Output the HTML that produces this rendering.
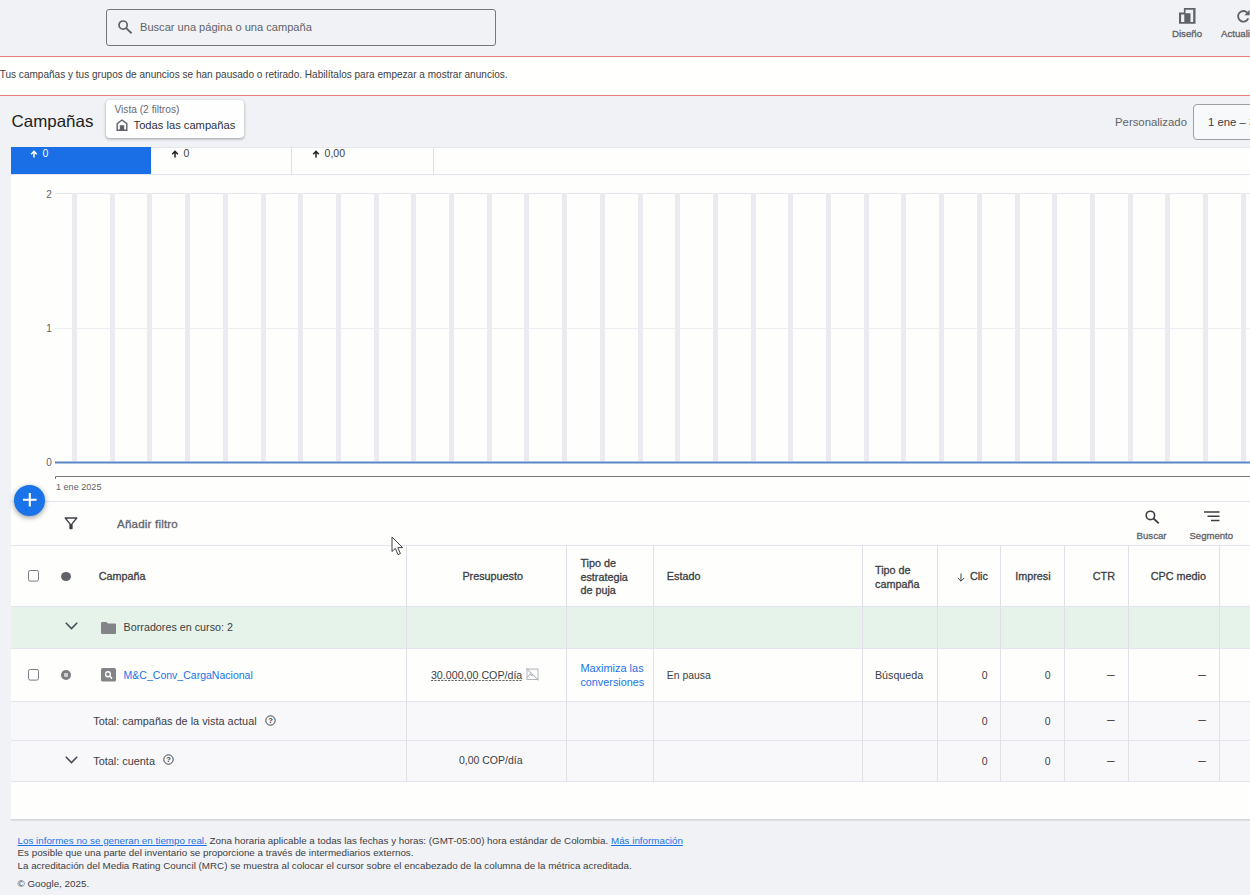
<!DOCTYPE html>
<html lang="es">
<head>
<meta charset="utf-8">
<title>Campañas</title>
<style>
*{box-sizing:border-box;margin:0;padding:0}
html,body{width:1250px;height:895px;overflow:hidden}
body{background:#f1f2f5;font-family:"Liberation Sans",sans-serif;color:#3c4043;position:relative;font-size:11px}
.abs{position:absolute;white-space:nowrap;line-height:1}
svg{position:absolute;overflow:visible}
#search{position:absolute;left:106px;top:9px;width:390px;height:37px;border:1px solid #73777c;border-radius:3px;background:#f1f2f5}
#banner{position:absolute;left:0;top:56px;width:1250px;height:40px;background:#fffffd;border-top:1px solid #e8837a;border-bottom:1px solid #e8837a}
#chip{position:absolute;left:106px;top:100px;width:138px;height:38px;background:#fefefe;border-radius:4px;box-shadow:0 1px 2px rgba(60,64,67,.3),0 1px 3px 1px rgba(60,64,67,.15)}
#datebtn{position:absolute;left:1193px;top:104px;width:80px;height:36px;border:1px solid #9aa0a6;border-radius:4px;background:#f8f9fa}
#card{position:absolute;left:11px;top:147px;width:1260px;height:672px;background:#fefefd;box-shadow:0 1px 0 #d5d6da,0 2px 0 #e0e1e5}
#tab1{position:absolute;left:0;top:0;width:140px;height:27px;background:#1a6ee6}
.vsep{position:absolute;width:1px;background:#e0e1e8}
.hline{position:absolute;left:0;width:1260px;height:1px;background:#e2e4ee}
.bar{position:absolute;top:46px;width:5px;height:268px;background:#e9ebf1}
.row{position:absolute;left:0;width:1260px}
.cb{position:absolute;width:11px;height:11px;border:1px solid #80868b;border-radius:2px;background:#fff}
.h{font-weight:bold;color:#3c4043}
.t{color:#3c4043}
.lnk{color:#1a73e8}
#fab{position:absolute;left:14px;top:485px;width:31px;height:31px;border-radius:50%;background:#1a73e8;box-shadow:0 2px 4px rgba(60,64,67,.35),0 1px 6px rgba(60,64,67,.2)}
.foot{position:absolute;left:17.5px;color:#3c4043;white-space:nowrap;line-height:1}
.foot a{color:#1a73e8;text-decoration:underline}
</style>
</head>
<body>
<div id="search"></div>
<svg style="left:118.4px;top:19.5px" width="15" height="14" viewBox="0 0 15 14"><circle cx="5.1" cy="5.1" r="4.1" fill="none" stroke="#5f6368" stroke-width="1.7"/><path d="M8.1 8.1 L13.6 13.2" stroke="#5f6368" stroke-width="1.9"/></svg>
<span class="abs" id="ph" style="left:140px;top:21.99px;font-size:11.08px;color:#5f6368;">Buscar una página o una campaña</span>
<svg style="left:1179px;top:8px" width="17" height="16" viewBox="0 0 17 16"><path fill-rule="evenodd" fill="#5f6368" d="M0 4.6 H4.9 V0 H16.5 V15.8 H0 Z M2.1 6.5 H5.3 V14 H2.1 Z M6.5 1.8 H14.2 V14 H11.5 V5.3 H6.5 Z"/></svg>
<span class="abs" id="dis" style="left:1172px;top:28.78px;font-size:9.66px;-webkit-text-stroke:0.3px;color:#5f6368;">Diseño</span>
<svg style="left:1236px;top:9px" width="14" height="14" viewBox="0 0 14 14"><path d="M11.2 3.6 A5.3 5.3 0 1 0 12.3 9.3" fill="none" stroke="#5f6368" stroke-width="1.8"/><path d="M13.6 0.8 V6.2 H8.4 Z" fill="#5f6368"/></svg>
<span class="abs" id="act" style="left:1221px;top:28.78px;font-size:9.66px;-webkit-text-stroke:0.3px;color:#5f6368;">Actualizar</span>
<div id="banner"></div>
<span class="abs" id="bt" style="left:-0.3px;top:70.09px;font-size:10.05px;color:#3c4043;">Tus campañas y tus grupos de anuncios se han pausado o retirado. Habilítalos para empezar a mostrar anuncios.</span>
<span class="abs" id="ttl" style="left:11.6px;top:113.53px;font-size:16.92px;color:#202124;">Campañas</span>
<div id="chip"></div>
<span class="abs" id="v1" style="left:114.4px;top:105.31px;font-size:10.21px;color:#686c71;">Vista (2 filtros)</span>
<svg style="left:116px;top:119px" width="12" height="12" viewBox="0 0 12 12"><path d="M1.2 11.2 V4.6 L6 1 L10.8 4.6 V11.2 Z" fill="none" stroke="#5f6368" stroke-width="1.4"/><rect x="3.8" y="6.2" width="4.4" height="5" fill="#5f6368"/></svg>
<span class="abs" id="v2" style="left:133.6px;top:120.34px;font-size:11.17px;color:#303336;">Todas las campañas</span>
<span class="abs" id="pers" style="left:1115px;top:117.25px;font-size:11.36px;color:#5f6368;">Personalizado</span>
<div id="datebtn"></div>
<span class="abs" id="dt" style="left:1208px;top:117.25px;font-size:11.36px;color:#3c4043;">1 ene – 31 ene 2025</span>
<div id="card">
<div class="hline" style="top:0;background:#e6e7eb"></div>
<div id="tab1"></div>
<div class="hline" style="top:27px"></div>
<div class="vsep" style="left:280px;top:0;height:27px"></div>
<div class="vsep" style="left:422px;top:0;height:27px"></div>
<svg style="left:18.9px;top:2.5px" width="8" height="8" viewBox="0 0 8 8"><path d="M4 7.6 V1.6 M1.2 4.2 L4 1.3 L6.8 4.2" fill="none" stroke="#fff" stroke-width="1.5"/></svg>
<span class="abs" id="m1" style="left:31.6px;top:1.17px;font-size:10.5px;color:#fff;">0</span>
<svg style="left:159.9px;top:2.5px" width="8" height="8" viewBox="0 0 8 8"><path d="M4 7.6 V1.6 M1.2 4.2 L4 1.3 L6.8 4.2" fill="none" stroke="#202124" stroke-width="1.5"/></svg>
<span class="abs" id="m2" style="left:172.6px;top:1.17px;font-size:10.5px;color:#3c4043;">0</span>
<svg style="left:300.9px;top:2.5px" width="8" height="8" viewBox="0 0 8 8"><path d="M4 7.6 V1.6 M1.2 4.2 L4 1.3 L6.8 4.2" fill="none" stroke="#202124" stroke-width="1.5"/></svg>
<span class="abs" id="m3" style="left:313.6px;top:1.17px;font-size:10.5px;color:#3c4043;">0,00</span>
<div style="position:absolute;left:44px;top:46px;width:1210px;height:1px;background:#e4e6ee"></div>
<div style="position:absolute;left:44px;top:181px;width:1210px;height:1px;background:#eceef3"></div>
<div class="bar" style="left:61.0px"></div>
<div class="bar" style="left:98.7px"></div>
<div class="bar" style="left:136.4px"></div>
<div class="bar" style="left:174.1px"></div>
<div class="bar" style="left:211.8px"></div>
<div class="bar" style="left:249.5px"></div>
<div class="bar" style="left:287.2px"></div>
<div class="bar" style="left:324.9px"></div>
<div class="bar" style="left:362.6px"></div>
<div class="bar" style="left:400.3px"></div>
<div class="bar" style="left:438.0px"></div>
<div class="bar" style="left:475.7px"></div>
<div class="bar" style="left:513.4px"></div>
<div class="bar" style="left:551.1px"></div>
<div class="bar" style="left:588.8px"></div>
<div class="bar" style="left:626.5px"></div>
<div class="bar" style="left:664.2px"></div>
<div class="bar" style="left:701.9px"></div>
<div class="bar" style="left:739.6px"></div>
<div class="bar" style="left:777.3px"></div>
<div class="bar" style="left:815.0px"></div>
<div class="bar" style="left:852.7px"></div>
<div class="bar" style="left:890.4px"></div>
<div class="bar" style="left:928.1px"></div>
<div class="bar" style="left:965.8px"></div>
<div class="bar" style="left:1003.5px"></div>
<div class="bar" style="left:1041.2px"></div>
<div class="bar" style="left:1078.9px"></div>
<div class="bar" style="left:1116.6px"></div>
<div class="bar" style="left:1154.3px"></div>
<div class="bar" style="left:1192.0px"></div>
<div class="bar" style="left:1229.7px"></div>
<div class="bar" style="left:1267.4px"></div>
<svg style="left:0;top:0" width="1260" height="672"><path d="M44 315.5 H1260" stroke="#5a86c6" stroke-width="1.9" fill="none"/><path d="M44.5 332 V329.5 H1260" stroke="#74777b" stroke-width="1" fill="none"/></svg>
<span class="abs" id="y2" style="left:35.2px;top:43.12px;font-size:10px;color:#5f6368;">2</span>
<span class="abs" id="y1" style="left:35.2px;top:177.01px;font-size:10px;color:#5f6368;">1</span>
<span class="abs" id="y0" style="left:35.2px;top:310.91px;font-size:10px;color:#5f6368;">0</span>
<span class="abs" id="xl" style="left:45px;top:335.96px;font-size:9.08px;color:#5f6368;">1 ene 2025</span>
<div class="hline" style="top:354px"></div>
<div class="hline" style="top:398px"></div>
<svg style="left:53px;top:370px" width="14" height="13" viewBox="0 0 14 13"><path d="M1.2 1 H12.8 L8 6.8 V11.6 H6 V6.8 Z" fill="none" stroke="#3c4043" stroke-width="1.3" stroke-linejoin="round"/><rect x="6" y="7" width="2" height="5" fill="#3c4043"/></svg>
<span class="abs" id="af" style="left:106px;top:371.33px;font-size:11.6px;-webkit-text-stroke:0.3px;color:#5f6368;letter-spacing:0.18px;">Añadir filtro</span>
<svg style="left:1133.5px;top:363px" width="15" height="14" viewBox="0 0 15 14"><circle cx="5.4" cy="5.4" r="4.2" fill="none" stroke="#3c4043" stroke-width="1.6"/><path d="M8.5 8.5 L13.8 13.4" stroke="#3c4043" stroke-width="1.8"/></svg>
<span class="abs" id="bs" style="left:1125.6px;top:383.71px;font-size:9.6px;-webkit-text-stroke:0.3px;color:#5f6368;">Buscar</span>
<svg style="left:1193px;top:364px" width="16" height="11" viewBox="0 0 16 11"><path d="M0 1 H15.5 M3.5 5.3 H15.5 M7 9.6 H15.5" stroke="#3c4043" stroke-width="1.5"/></svg>
<span class="abs" id="sg" style="left:1178.4px;top:383.71px;font-size:9.6px;-webkit-text-stroke:0.3px;color:#5f6368;">Segmento</span>
<div class="row" style="top:460px;height:41px;background:#e6f3ea"></div>
<div class="row" style="top:555px;height:79px;background:#f8f8fb"></div>
<div class="hline" style="top:459px"></div>
<div class="hline" style="top:501px"></div>
<div class="hline" style="top:554px"></div>
<div class="hline" style="top:593px"></div>
<div class="hline" style="top:634px"></div>
<div class="vsep" style="left:395px;top:399px;height:235px"></div>
<div class="vsep" style="left:555px;top:399px;height:235px"></div>
<div class="vsep" style="left:642px;top:399px;height:235px"></div>
<div class="vsep" style="left:851px;top:399px;height:235px"></div>
<div class="vsep" style="left:926px;top:399px;height:235px"></div>
<div class="vsep" style="left:989px;top:399px;height:235px"></div>
<div class="vsep" style="left:1053px;top:399px;height:235px"></div>
<div class="vsep" style="left:1117px;top:399px;height:235px"></div>
<div class="vsep" style="left:1208px;top:399px;height:235px"></div>
<svg style="left:17px;top:423.2px" width="11" height="12" viewBox="0 0 11 12"><rect x="0.5" y="0.5" width="10" height="10.6" rx="1.8" fill="#fff" stroke="#787a80" stroke-width="1"/></svg>
<div style="position:absolute;left:50px;top:425px;width:10px;height:9px;border-radius:50%;background:#5f6368"></div>
<span class="abs" id="h1" style="left:87.8px;top:424.42px;font-size:10.8px;-webkit-text-stroke:0.3px;color:#3c4043;">Campaña</span>
<span class="abs" id="h2" style="right:748px;top:424.42px;font-size:10.8px;-webkit-text-stroke:0.3px;color:#3c4043;">Presupuesto</span>
<span class="abs" id="h3a" style="left:569.4px;top:411.22px;font-size:10.8px;-webkit-text-stroke:0.3px;color:#3c4043;">Tipo de</span>
<span class="abs" id="h3b" style="left:569.4px;top:424.72px;font-size:10.8px;-webkit-text-stroke:0.3px;color:#3c4043;">estrategia</span>
<span class="abs" id="h3c" style="left:569.4px;top:438.32px;font-size:10.8px;-webkit-text-stroke:0.3px;color:#3c4043;">de puja</span>
<span class="abs" id="h4" style="left:655.8px;top:424.42px;font-size:10.8px;-webkit-text-stroke:0.3px;color:#3c4043;">Estado</span>
<span class="abs" id="h5a" style="left:864px;top:418.12px;font-size:10.8px;-webkit-text-stroke:0.3px;color:#3c4043;">Tipo de</span>
<span class="abs" id="h5b" style="left:864px;top:431.52px;font-size:10.8px;-webkit-text-stroke:0.3px;color:#3c4043;">campaña</span>
<span class="abs" id="h6" style="right:283.1px;top:424.42px;font-size:10.8px;-webkit-text-stroke:0.3px;color:#3c4043;">Clic</span>
<svg style="left:945.5px;top:425.5px" width="8" height="9" viewBox="0 0 8 9"><path d="M4 0.5 V8 M0.8 5 L4 8.2 L7.2 5" fill="none" stroke="#3c4043" stroke-width="1"/></svg>
<span class="abs" id="h7" style="right:220.4px;top:424.42px;font-size:10.8px;-webkit-text-stroke:0.3px;color:#3c4043;">Impresi</span>
<span class="abs" id="h8" style="right:156px;top:424.42px;font-size:10.8px;-webkit-text-stroke:0.3px;color:#3c4043;">CTR</span>
<span class="abs" id="h9" style="right:65px;top:424.42px;font-size:10.8px;-webkit-text-stroke:0.3px;color:#3c4043;">CPC medio</span>
<svg style="left:53.6px;top:475.3px" width="13" height="8" viewBox="0 0 13 8"><path d="M0.8 0.8 L6.5 6.6 L12.2 0.8" fill="none" stroke="#454a54" stroke-width="1.5"/></svg>
<svg style="left:89.5px;top:474.5px" width="15" height="12" viewBox="0 0 16 12" preserveAspectRatio="none"><path d="M1.2 0 H5.8 L7.4 1.6 H14.8 Q16 1.6 16 2.8 V10.8 Q16 12 14.8 12 H1.2 Q0 12 0 10.8 V1.2 Q0 0 1.2 0 Z" fill="#828487"/></svg>
<span class="abs" id="d1" style="left:112.6px;top:475.05px;font-size:10.75px;color:#3c4043;">Borradores en curso: 2</span>
<svg style="left:17px;top:522.1px" width="11" height="12" viewBox="0 0 11 12"><rect x="0.5" y="0.5" width="10" height="10.6" rx="1.8" fill="#fff" stroke="#787a80" stroke-width="1"/></svg>
<svg style="left:50px;top:523.3px" width="10" height="10" viewBox="0 0 10 10"><circle cx="5" cy="5" r="5" fill="#7d7f83"/><rect x="3" y="3" width="4" height="4" rx="0.8" fill="#cfd0d3"/></svg>
<svg style="left:89.5px;top:521.3px" width="15" height="13.5" viewBox="0 0 16 13.5" preserveAspectRatio="none"><rect width="16" height="13.5" rx="1.6" fill="#828487"/><circle cx="7.4" cy="6.2" r="2.5" fill="none" stroke="#fff" stroke-width="1.4"/><path d="M9.2 8 L11.8 10.6" stroke="#fff" stroke-width="1.5"/></svg>
<span class="abs" id="c1" style="left:112.6px;top:523.16px;font-size:10.52px;color:#1a73e8;">M&amp;C_Conv_CargaNacional</span>
<span class="abs" id="c2" style="right:748.7px;top:523.08px;font-size:10.68px;color:#3c4043;">30.000,00 COP/día</span>
<svg style="left:420px;top:533px" width="92" height="2" viewBox="0 0 92 2"><path d="M0 0.5 H91.6" stroke="#62666b" stroke-width="1" stroke-dasharray="2.2 1.2" fill="none"/></svg>
<svg style="left:515px;top:521px" width="13" height="13" viewBox="0 0 13 12" preserveAspectRatio="none"><rect x="1" y="1" width="11" height="9.6" fill="none" stroke="#b4b8be" stroke-width="1"/><path d="M0.3 0.3 L12.6 11.5 M1 9 L4.2 5.6 L6.4 7.6" fill="none" stroke="#b4b8be" stroke-width="1"/></svg>
<span class="abs" id="c3a" style="left:569.4px;top:516.25px;font-size:10.95px;color:#1a73e8;">Maximiza las</span>
<span class="abs" id="c3b" style="left:569.4px;top:529.9px;font-size:10.85px;color:#1a73e8;">conversiones</span>
<span class="abs" id="c4" style="left:655.8px;top:523.91px;font-size:10.41px;color:#3c4043;">En pausa</span>
<span class="abs" id="c5" style="left:864px;top:523.08px;font-size:10.68px;color:#3c4043;">Búsqueda</span>
<span class="abs" id="c6" style="right:283.3px;top:523.17px;font-size:10.5px;color:#3c4043;">0</span>
<span class="abs" id="c7" style="right:220.4px;top:523.17px;font-size:10.5px;color:#3c4043;">0</span>
<span class="abs" id="c8" style="right:156.3px;top:520.51px;font-size:13.7px;color:#3c4043;">–</span>
<span class="abs" id="c9" style="right:65.2px;top:520.51px;font-size:13.7px;color:#3c4043;">–</span>
<span class="abs" id="t1" style="left:82.2px;top:568.68px;font-size:10.9px;color:#3c4043;">Total: campañas de la vista actual</span>
<svg style="left:254px;top:567.8px" width="11" height="11" viewBox="0 0 11 11"><circle cx="5.5" cy="5.5" r="4.7" fill="none" stroke="#3c4043" stroke-width="1"/><text x="5.5" y="8.3" font-size="7.5" font-weight="bold" text-anchor="middle" fill="#3c4043" font-family="Liberation Sans, sans-serif">?</text></svg>
<span class="abs" id="t6" style="right:283.3px;top:568.87px;font-size:10.5px;color:#3c4043;">0</span>
<span class="abs" id="t7" style="right:220.4px;top:568.87px;font-size:10.5px;color:#3c4043;">0</span>
<span class="abs" id="t8" style="right:156.3px;top:566.21px;font-size:13.7px;color:#3c4043;">–</span>
<span class="abs" id="t9" style="right:65.2px;top:566.21px;font-size:13.7px;color:#3c4043;">–</span>
<svg style="left:54px;top:609px" width="13" height="8" viewBox="0 0 13 8"><path d="M0.8 0.8 L6.5 6.6 L12.2 0.8" fill="none" stroke="#454a54" stroke-width="1.5"/></svg>
<span class="abs" id="u1" style="left:82.2px;top:608.98px;font-size:10.9px;color:#3c4043;">Total: cuenta</span>
<svg style="left:151.5px;top:607.3px" width="11" height="11" viewBox="0 0 11 11"><circle cx="5.5" cy="5.5" r="4.7" fill="none" stroke="#3c4043" stroke-width="1"/><text x="5.5" y="8.3" font-size="7.5" font-weight="bold" text-anchor="middle" fill="#3c4043" font-family="Liberation Sans, sans-serif">?</text></svg>
<span class="abs" id="u2" style="right:748.5px;top:609.18px;font-size:10.49px;color:#3c4043;">0,00 COP/día</span>
<span class="abs" id="u6" style="right:283.3px;top:609.17px;font-size:10.5px;color:#3c4043;">0</span>
<span class="abs" id="u7" style="right:220.4px;top:609.17px;font-size:10.5px;color:#3c4043;">0</span>
<span class="abs" id="u8" style="right:156.3px;top:606.51px;font-size:13.7px;color:#3c4043;">–</span>
<span class="abs" id="u9" style="right:65.2px;top:606.51px;font-size:13.7px;color:#3c4043;">–</span>
<svg style="left:379.5px;top:389px" width="13" height="20" viewBox="0 0 13 20"><path d="M1 1 V15.5 L4.4 12.4 L7 18.6 L9.4 17.6 L6.8 11.6 H11.6 Z" fill="#fff" stroke="#444" stroke-width="1" stroke-linejoin="round"/></svg>
</div>
<div id="fab"></div>
<svg style="left:23.2px;top:493.2px" width="13.6" height="13.6" viewBox="0 0 13 13"><path d="M6.5 0 V13 M0 6.5 H13" stroke="#fff" stroke-width="2"/></svg>
<div class="foot" id="f1" style="top:835.7px;font-size:9.82px"><a>Los informes no se generan en tiempo real.</a> Zona horaria aplicable a todas las fechas y horas: (GMT-05:00) hora estándar de Colombia. <a>Más información</a></div>
<div class="foot" id="f2" style="top:848.1px;font-size:9.82px">Es posible que una parte del inventario se proporcione a través de intermediarios externos.</div>
<div class="foot" id="f3" style="top:860.7px;font-size:9.82px">La acreditación del Media Rating Council (MRC) se muestra al colocar el cursor sobre el encabezado de la columna de la métrica acreditada.</div>
<div class="foot" id="f4" style="top:879.3px;font-size:9.82px">© Google, 2025.</div>
</body>
</html>
